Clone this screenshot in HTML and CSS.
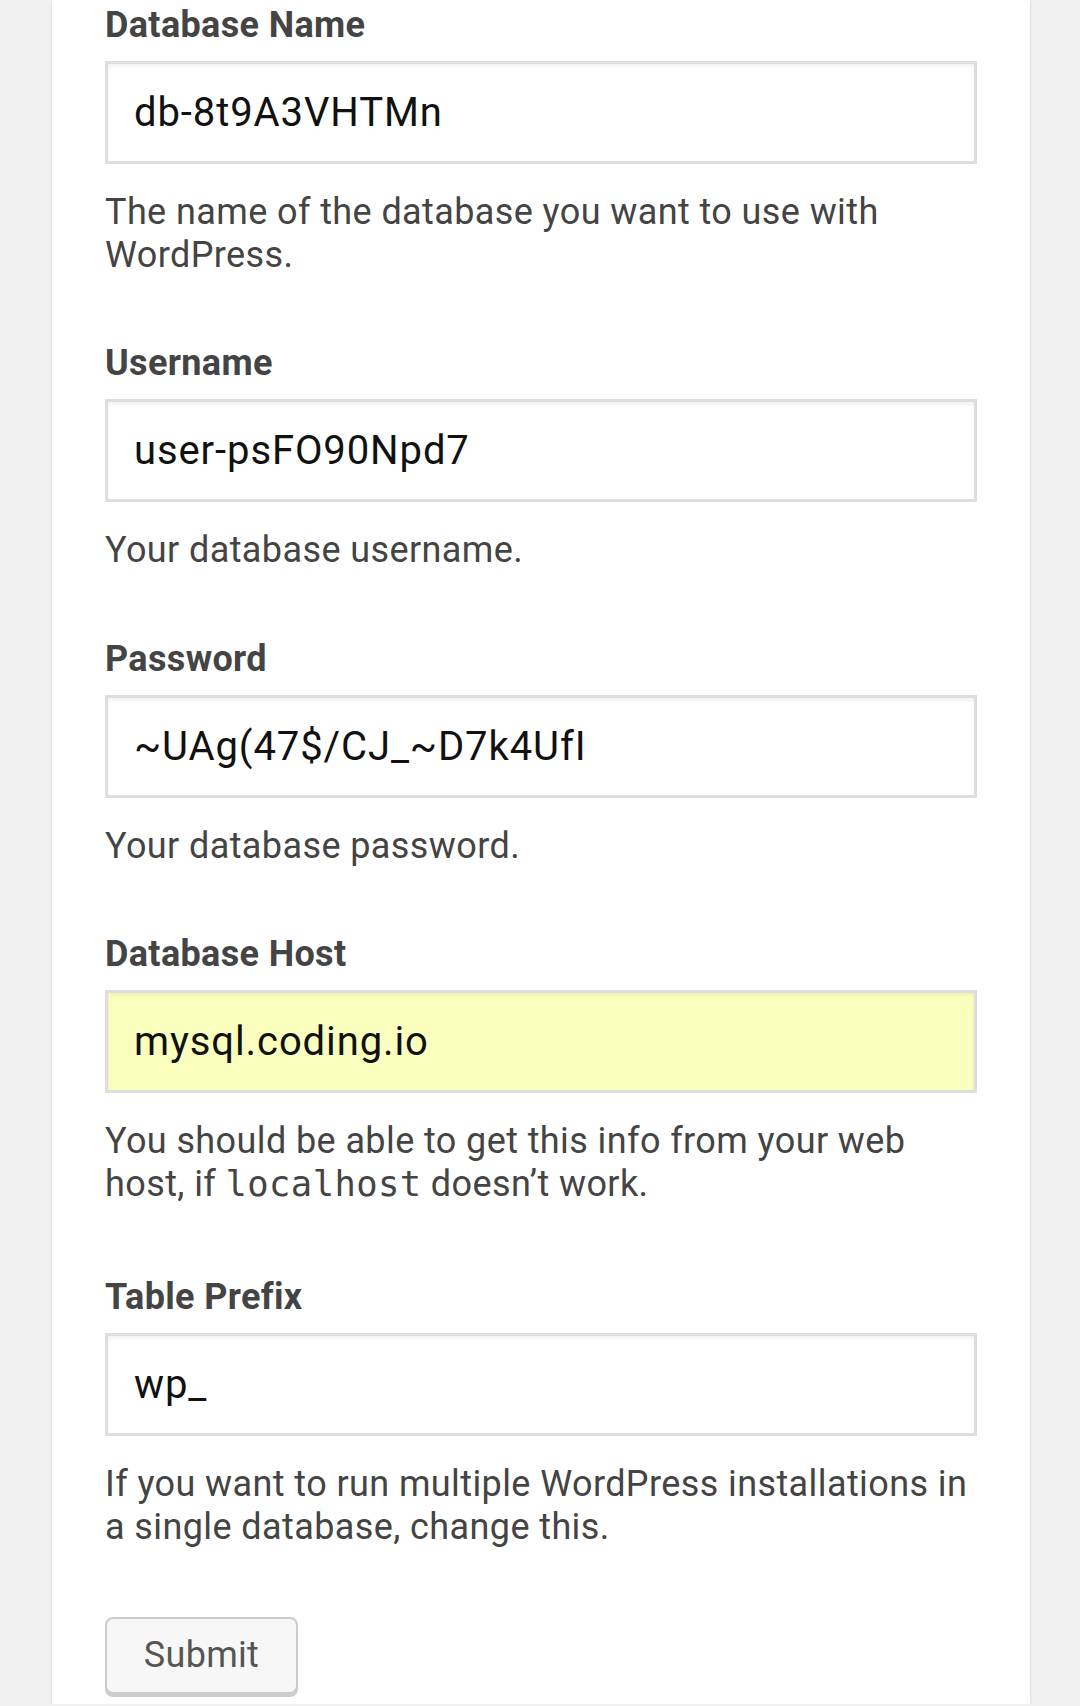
FILE: index.html
```html
<!DOCTYPE html>
<html lang="en">
<head>
<meta charset="utf-8">
<title>WordPress › Setup Configuration File</title>
<link rel="stylesheet" href="styles.css">
</head>
<body>
<div class="card">
  <form class="setup-form">
    <div class="group">
      <div class="label">Database Name</div>
      <div class="field">db-8t9A3VHTMn</div>
      <p class="desc">The name of the database you want to use with WordPress.</p>
    </div>
    <div class="group">
      <div class="label">Username</div>
      <div class="field">user-psFO90Npd7</div>
      <p class="desc">Your database username.</p>
    </div>
    <div class="group">
      <div class="label">Password</div>
      <div class="field">~UAg(47$/CJ_~D7k4UfI</div>
      <p class="desc">Your database password.</p>
    </div>
    <div class="group">
      <div class="label">Database Host</div>
      <div class="field field-autofill">mysql.coding.io</div>
      <p class="desc desc-code"><span>You should be able to get this info from your web</span> <span>host, if</span> <code>localhost</code> <span>doesn’t work.</span></p>
    </div>
    <div class="group">
      <div class="label">Table Prefix</div>
      <div class="field">wp_</div>
      <p class="desc">If you want to run multiple WordPress installations in a single database, change this.</p>
    </div>
    <div class="actions">
      <div class="button">Submit</div>
    </div>
  </form>
</div>
</body>
</html>
```

FILE: styles.css
```css
html, body {
  margin: 0;
  padding: 0;
}

body {
  background: #f1f1f1;
  font-family: Roboto, "Noto Sans", "Liberation Sans", sans-serif;
  color: #444;
}

.card {
  margin: 0 50px 0 52px;
  background: #fff;
  box-shadow: 0 1px 3px rgba(0, 0, 0, 0.13);
  padding: 5px 53px 6px 53px;
  min-height: 1693px;
}

.setup-form {
  display: flex;
  flex-direction: column;
  gap: 66px;
}

.group {
  display: flex;
  flex-direction: column;
}

.label {
  font-size: 36px;
  line-height: 41px;
  font-weight: 700;
  letter-spacing: 0.35px;
  color: #444;
  margin-bottom: 15px;
}

.field {
  box-sizing: border-box;
  height: 103px;
  border: 3px solid #dedede;
  box-shadow: inset 0 2px 4px rgba(0, 0, 0, 0.06);
  background: #fff;
  padding: 0 26px;
  display: flex;
  align-items: center;
  font-size: 40px;
  letter-spacing: 0.9px;
  color: #111;
  white-space: nowrap;
}

.field-autofill {
  background: #faffbd;
}

.desc {
  margin: 27px 0 0 0;
  font-size: 36px;
  line-height: 43.2px;
  letter-spacing: 0.4px;
  color: #444;
}

.desc-code {
  margin-bottom: 5px;
}

.desc code {
  display: inline-block;
  font-family: "DejaVu Sans Mono", "Liberation Mono", monospace;
  font-size: 35.5px;
  line-height: 34px;
  letter-spacing: 0.4px;
  color: #444;
}

.actions {
  display: flex;
  margin-top: 1px;
}

.button {
  box-sizing: border-box;
  width: 193px;
  height: 77px;
  border: 2px solid #cccccc;
  border-radius: 8px;
  background: #f7f7f7;
  box-shadow: 0 3px 0 #cccccc;
  color: #555;
  font-size: 36px;
  letter-spacing: 0.3px;
  display: flex;
  align-items: center;
  justify-content: center;
}
```
